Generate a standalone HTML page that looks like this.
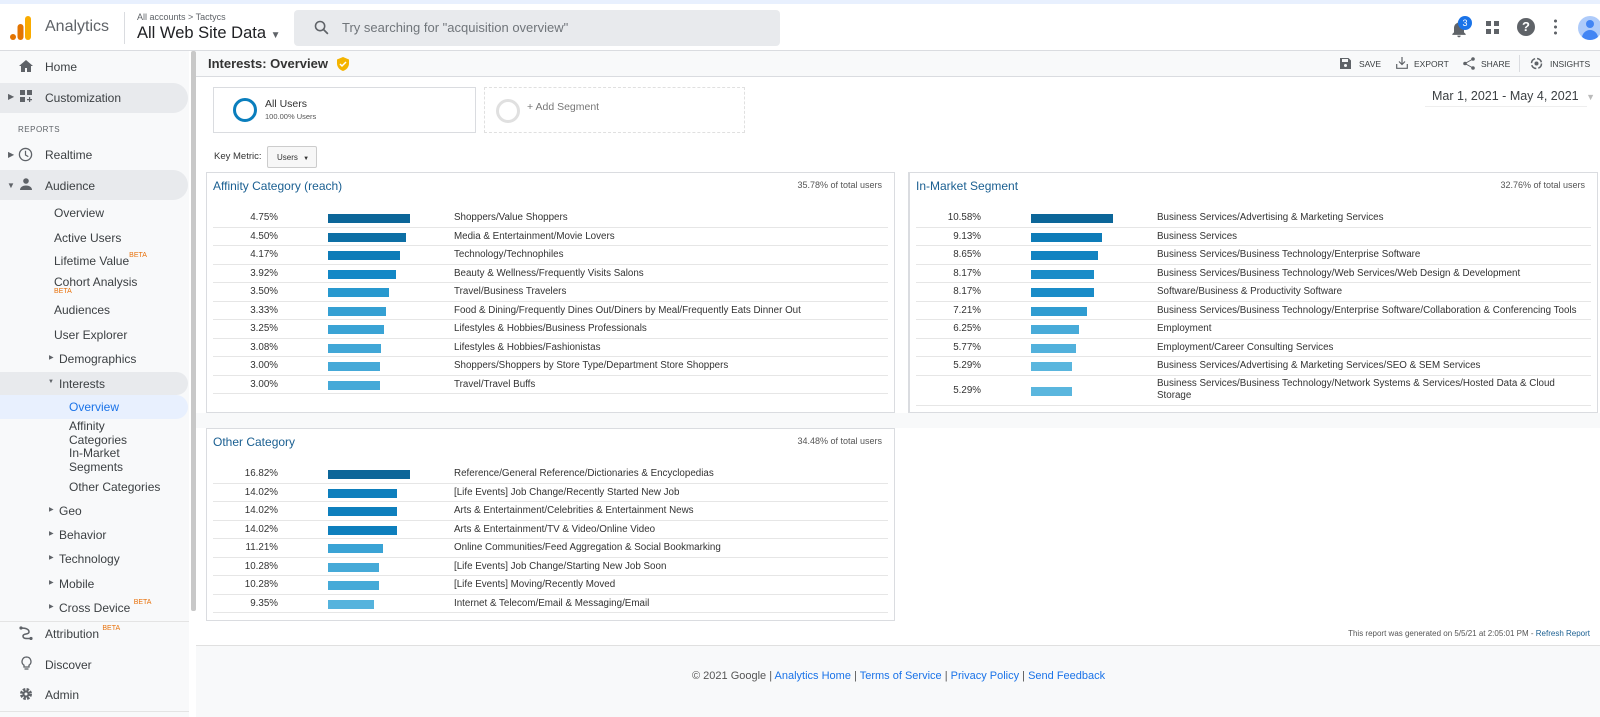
<!DOCTYPE html>
<html><head><meta charset="utf-8"><style>
*{box-sizing:border-box;margin:0;padding:0}
body{width:1600px;height:717px;overflow:hidden;font-family:"Liberation Sans",Arial,sans-serif;background:#fff;color:#333;position:relative}
.a{position:absolute;white-space:nowrap}
#top{position:absolute;left:0;top:0;width:1600px;height:4px;background:#e8f0fe}
#hdr{position:absolute;left:0;top:4px;width:1600px;height:47px;border-bottom:1px solid #dadce0;background:#fff}
#side{position:absolute;left:0;top:51px;width:189px;height:666px;background:#f8f9fa}
#sb{position:absolute;left:191px;top:51px;width:5px;height:560px;background:#c8c8c8;border-radius:2px}
.si{position:absolute;font-size:12px;color:#3c4043;white-space:nowrap}
.hl{position:absolute;left:0;width:188px;background:#e8eaed;border-radius:0 16px 16px 0}
.beta{font-size:7px;color:#e8710a;vertical-align:top;position:relative;top:-2px}
.tri{font-size:8px;color:#5f6368;position:absolute}
.panel{position:absolute;border:1px solid #dadce0;background:#fff}
.ptitle{position:absolute;left:6px;top:6px;font-size:12px;color:#1a5f91}
.ptot{position:absolute;right:12px;top:7px;font-size:9px;color:#555}
.rows{position:absolute;left:6px;right:6px;top:36px}
.r{position:relative;height:18.5px;border-bottom:1px solid #e6e6e6;font-size:9.8px;color:#333}
.r .p{position:absolute;right:calc(100% - 65px);top:3px}
.r .b{position:absolute;left:115px;top:5px;height:9px}
.r .l{position:absolute;left:241px;top:3px;white-space:nowrap}
</style></head><body>
<div id="top"></div>
<div id="hdr">
 <svg class="a" style="left:10px;top:12px" width="22" height="24" viewBox="0 0 22 24"><rect x="15" y="0" width="6" height="24" rx="3" fill="#f9ab00"/><rect x="7.5" y="8" width="6" height="16" rx="3" fill="#e37400"/><circle cx="3" cy="21" r="3" fill="#e37400"/></svg>
 <div class="a" style="left:45px;top:14px;font-size:16px;color:#5f6368">Analytics</div>
 <div class="a" style="left:124px;top:8px;width:1px;height:32px;background:#dadce0"></div>
 <div class="a" style="left:137px;top:8px;font-size:9px;color:#5f6368">All accounts &gt; Tactycs</div>
 <div class="a" style="left:137px;top:20px;font-size:16.5px;color:#202124">All Web Site Data <span style="font-size:10px;color:#5f6368">▼</span></div>
 <div class="a" style="left:294px;top:6px;width:486px;height:36px;background:#e8eaed;border-radius:4px"></div>
 <svg class="a" style="left:313px;top:15px" width="17" height="17" viewBox="0 0 24 24"><circle cx="10" cy="10" r="6.5" stroke="#5f6368" stroke-width="2.2" fill="none"/><path d="M15 15l6 6" stroke="#5f6368" stroke-width="2.4"/></svg>
 <div class="a" style="left:342px;top:16px;font-size:13px;color:#70757a">Try searching for "acquisition overview"</div>
 <svg class="a" style="left:1449px;top:15px" width="20" height="20" viewBox="0 0 24 24"><path d="M12 22a2 2 0 002-2h-4a2 2 0 002 2zm6-6V11c0-3-1.6-5.6-4.5-6.3V4a1.5 1.5 0 00-3 0v.7C7.6 5.4 6 8 6 11v5l-2 2v1h16v-1z" fill="#5f6368"/></svg>
 <div class="a" style="left:1458px;top:12px;width:14px;height:14px;border-radius:7px;background:#1a73e8;color:#fff;font-size:9px;text-align:center;line-height:14px">3</div>
 <svg class="a" style="left:1486px;top:17px" width="14" height="14" viewBox="0 0 14 14" fill="#5f6368"><rect x="0" y="0" width="5" height="5"/><rect x="8" y="0" width="5" height="5"/><rect x="0" y="8" width="5" height="5"/><rect x="8" y="8" width="5" height="5"/></svg>
 <div class="a" style="left:1517px;top:14px;width:18px;height:18px;border-radius:9px;background:#5f6368;color:#fff;font-size:13px;font-weight:bold;text-align:center;line-height:18px">?</div>
 <div class="a" style="left:1554px;top:14px;width:3px;height:18px;background:radial-gradient(circle,#5f6368 1.4px,transparent 1.6px) 0 0/3px 6px"></div>
 <div class="a" style="left:1578px;top:12px;width:24px;height:24px;border-radius:12px;background:#aecbfa;overflow:hidden"><div class="a" style="left:8px;top:4px;width:8px;height:8px;border-radius:4px;background:#4285f4"></div><div class="a" style="left:4px;top:14px;width:16px;height:12px;border-radius:8px 8px 0 0;background:#4285f4"></div></div>
</div>

<div id="side">
 <div class="hl" style="top:32px;height:30px"></div>
 <div class="hl" style="top:119px;height:30px"></div>
 <div class="hl" style="top:321px;height:23px"></div>
 <div class="hl" style="top:344px;height:24px;background:#e8f0fe"></div>
 <div class="a" style="left:0;top:570px;width:189px;height:1px;background:#e4e4e4"></div>
 <div class="a" style="left:0;top:660px;width:189px;height:1px;background:#e4e4e4"></div>
</div>
<div id="sb"></div>
<svg class="a" style="left:19px;top:60px" width="14" height="12" viewBox="0 0 14 12"><path d="M7 0L0 6h2v6h4V8h2v4h4V6h2z" fill="#5f6368"/></svg>
<div class="si" style="left:45px;top:60px">Home</div>
<div class="tri" style="left:8px;top:92px">▶</div>
<svg class="a" style="left:20px;top:90px" width="13" height="13" viewBox="0 0 13 13" fill="#5f6368"><rect x="0" y="0" width="5" height="5"/><rect x="7" y="0" width="5" height="5"/><rect x="0" y="7" width="5" height="5"/><path d="M9 7h1.2v2H12v1.2h-1.8V12H9v-1.8H7V9h2z"/></svg>
<div class="si" style="left:45px;top:91px">Customization</div>
<div class="si" style="left:18px;top:125px;font-size:8px;letter-spacing:.5px;color:#5f6368">REPORTS</div>
<div class="tri" style="left:8px;top:150px">▶</div>
<svg class="a" style="left:18px;top:147px" width="15" height="15" viewBox="0 0 16 16"><circle cx="8" cy="8" r="6.5" stroke="#5f6368" stroke-width="1.4" fill="none"/><path d="M8 4v4.5l3 1.8" stroke="#5f6368" stroke-width="1.3" fill="none"/></svg>
<div class="si" style="left:45px;top:148px">Realtime</div>
<div class="tri" style="left:7px;top:181px">▼</div>
<svg class="a" style="left:20px;top:178px" width="12" height="12" viewBox="0 0 12 12" fill="#5f6368"><circle cx="6" cy="3" r="2.8"/><path d="M0 12c0-3 3-4.5 6-4.5s6 1.5 6 4.5z"/></svg>
<div class="si" style="left:45px;top:179px">Audience</div>
<div class="si" style="left:54px;top:206px">Overview</div>
<div class="si" style="left:54px;top:231px">Active Users</div>
<div class="si" style="left:54px;top:254px">Lifetime Value<span class="beta">BETA</span></div>
<div class="si" style="left:54px;top:275px">Cohort Analysis</div>
<div class="a" style="left:54px;top:288px;font-size:7px;color:#e8710a">BETA</div>
<div class="si" style="left:54px;top:303px">Audiences</div>
<div class="si" style="left:54px;top:328px">User Explorer</div>
<div class="tri" style="left:49px;top:354px;font-size:6px">▶</div>
<div class="si" style="left:59px;top:352px">Demographics</div>
<div class="tri" style="left:48px;top:379px;font-size:6px">▼</div>
<div class="si" style="left:59px;top:377px">Interests</div>
<div class="si" style="left:69px;top:400px;color:#1a73e8">Overview</div>
<div class="si" style="left:69px;top:420px;line-height:13.5px">Affinity<br>Categories<br>In-Market<br>Segments</div>
<div class="si" style="left:69px;top:480px">Other Categories</div>
<div class="tri" style="left:49px;top:506px;font-size:6px">▶</div><div class="si" style="left:59px;top:504px">Geo</div>
<div class="tri" style="left:49px;top:530px;font-size:6px">▶</div><div class="si" style="left:59px;top:528px">Behavior</div>
<div class="tri" style="left:49px;top:554px;font-size:6px">▶</div><div class="si" style="left:59px;top:552px">Technology</div>
<div class="tri" style="left:49px;top:579px;font-size:6px">▶</div><div class="si" style="left:59px;top:577px">Mobile</div>
<div class="tri" style="left:49px;top:603px;font-size:6px">▶</div><div class="si" style="left:59px;top:601px">Cross Device <span class="beta">BETA</span></div>
<svg class="a" style="left:19px;top:626px" width="14" height="14" viewBox="0 0 14 14"><path d="M2 2c5 0 8 1 8 4s-6 1-6 4 3 2.5 8 2.5" stroke="#5f6368" stroke-width="1.5" fill="none"/><circle cx="2" cy="2" r="1.6" fill="#5f6368"/><circle cx="12" cy="12.5" r="1.6" fill="#5f6368"/></svg>
<div class="si" style="left:45px;top:627px">Attribution <span class="beta">BETA</span></div>
<svg class="a" style="left:21px;top:656px" width="11" height="15" viewBox="0 0 11 15"><path d="M5.5 1a4.5 4.5 0 00-2.5 8.2V11h5V9.2A4.5 4.5 0 005.5 1z" stroke="#5f6368" stroke-width="1.3" fill="none"/><path d="M3.5 13h4" stroke="#5f6368" stroke-width="1.3"/></svg>
<div class="si" style="left:45px;top:658px">Discover</div>
<svg class="a" style="left:19px;top:687px" width="14" height="14" viewBox="0 0 14 14"><circle cx="7" cy="7" r="4.5" fill="none" stroke="#5f6368" stroke-width="3" stroke-dasharray="2.4 1.2"/><circle cx="7" cy="7" r="3.5" fill="#5f6368"/><circle cx="7" cy="7" r="1.5" fill="#f8f9fa"/></svg>
<div class="si" style="left:45px;top:688px">Admin</div>

<!-- main -->
<div class="a" style="left:196px;top:51px;width:1404px;height:26px;background:#f8f9fa;border-bottom:1px solid #dadce0"></div>
<div class="a" style="left:208px;top:56px;font-size:13px;font-weight:bold;color:#333">Interests: Overview</div>
<svg class="a" style="left:337px;top:57px" width="12" height="14" viewBox="0 0 12 14"><path d="M6 0L0 2.5v4C0 10 2.7 13 6 14c3.3-1 6-4 6-7.5v-4z" fill="#f4b400"/><path d="M3 7l2 2 4-4" stroke="#fff" stroke-width="1.5" fill="none"/></svg>
<svg class="a" style="left:1340px;top:58px" width="11" height="11" viewBox="0 0 11 11"><path d="M0 0h8.5L11 2.5V11H0z" fill="#5f6368"/><rect x="2" y="1" width="6" height="3" fill="#f8f9fa"/><circle cx="5.5" cy="7.5" r="1.5" fill="#f8f9fa"/></svg>
<div class="a" style="left:1359px;top:59px;font-size:8.5px;color:#3c4043">SAVE</div>
<svg class="a" style="left:1396px;top:57px" width="12" height="12" viewBox="0 0 12 12"><path d="M6 0v7M3 4.5L6 7.5 9 4.5M.7 7v4.3h10.6V7" stroke="#5f6368" stroke-width="1.2" fill="none"/></svg>
<div class="a" style="left:1414px;top:59px;font-size:8.5px;color:#3c4043">EXPORT</div>
<svg class="a" style="left:1463px;top:57px" width="12" height="13" viewBox="0 0 12 13"><circle cx="10" cy="2" r="1.8" fill="#5f6368"/><circle cx="2" cy="6.5" r="1.8" fill="#5f6368"/><circle cx="10" cy="11" r="1.8" fill="#5f6368"/><path d="M10 2L2 6.5 10 11" stroke="#5f6368" fill="none"/></svg>
<div class="a" style="left:1481px;top:59px;font-size:8.5px;color:#3c4043">SHARE</div>
<div class="a" style="left:1519px;top:55px;width:1px;height:17px;background:#dadce0"></div>
<svg class="a" style="left:1530px;top:57px" width="13" height="13" viewBox="0 0 13 13"><circle cx="6.5" cy="6.5" r="5" stroke="#5f6368" stroke-width="1.5" fill="none" stroke-dasharray="6 2"/><circle cx="6.5" cy="6.5" r="2" fill="#5f6368"/></svg>
<div class="a" style="left:1550px;top:59px;font-size:8.5px;color:#3c4043">INSIGHTS</div>

<div class="a" style="left:213px;top:87px;width:263px;height:46px;border:1px solid #dadce0"></div>
<div class="a" style="left:233px;top:98px;width:24px;height:24px;border-radius:12px;border:3px solid #0a7ebd"></div>
<div class="a" style="left:265px;top:98px;font-size:10.5px;color:#333">All Users</div>
<div class="a" style="left:265px;top:112px;font-size:7.5px;color:#555">100.00% Users</div>
<div class="a" style="left:484px;top:87px;width:261px;height:46px;border:1px dashed #e0e0e0"></div>
<div class="a" style="left:496px;top:99px;width:24px;height:24px;border-radius:12px;border:3px solid #e0e0e0"></div>
<div class="a" style="left:527px;top:101px;font-size:10.5px;color:#777">+ Add Segment</div>
<div class="a" style="left:1432px;top:89px;font-size:12.5px;color:#3c4043">Mar 1, 2021 - May 4, 2021 <span style="color:#bbb;font-size:9px;margin-left:4px">▼</span></div>
<div class="a" style="left:1425px;top:106px;width:162px;height:1px;background:#eee"></div>
<div class="a" style="left:214px;top:151px;font-size:9.5px;color:#333">Key Metric:</div>
<div class="a" style="left:267px;top:146px;width:50px;height:22px;border:1px solid #ccc;border-radius:2px;background:#f7f7f7;font-size:8px;color:#333;padding:6px 0 0 9px">Users <span style="font-size:6px;margin-left:3px">▼</span></div>

<div class="panel" style="left:206px;top:172px;width:689px;height:241px">
 <div class="ptitle">Affinity Category (reach)</div><div class="ptot">35.78% of total users</div>
 <div class="rows">
  <div class="r"><span class="p">4.75%</span><span class="b" style="width:82px;background:#0c6699"></span><span class="l">Shoppers/Value Shoppers</span></div>
  <div class="r"><span class="p">4.50%</span><span class="b" style="width:78px;background:#0d6fa5"></span><span class="l">Media &amp; Entertainment/Movie Lovers</span></div>
  <div class="r"><span class="p">4.17%</span><span class="b" style="width:72px;background:#0e7cb8"></span><span class="l">Technology/Technophiles</span></div>
  <div class="r"><span class="p">3.92%</span><span class="b" style="width:68px;background:#1388c6"></span><span class="l">Beauty &amp; Wellness/Frequently Visits Salons</span></div>
  <div class="r"><span class="p">3.50%</span><span class="b" style="width:61px;background:#2899cf"></span><span class="l">Travel/Business Travelers</span></div>
  <div class="r"><span class="p">3.33%</span><span class="b" style="width:58px;background:#35a0d3"></span><span class="l">Food &amp; Dining/Frequently Dines Out/Diners by Meal/Frequently Eats Dinner Out</span></div>
  <div class="r"><span class="p">3.25%</span><span class="b" style="width:56px;background:#3aa3d5"></span><span class="l">Lifestyles &amp; Hobbies/Business Professionals</span></div>
  <div class="r"><span class="p">3.08%</span><span class="b" style="width:53px;background:#41a7d7"></span><span class="l">Lifestyles &amp; Hobbies/Fashionistas</span></div>
  <div class="r"><span class="p">3.00%</span><span class="b" style="width:52px;background:#45a9d8"></span><span class="l">Shoppers/Shoppers by Store Type/Department Store Shoppers</span></div>
  <div class="r"><span class="p">3.00%</span><span class="b" style="width:52px;background:#45a9d8"></span><span class="l">Travel/Travel Buffs</span></div>
 </div>
</div>
<div class="a" style="left:895px;top:172px;width:14px;height:241px;background:#fff;border-right:1px solid #dadce0"></div>
<div class="panel" style="left:909px;top:172px;width:689px;height:241px">
 <div class="ptitle">In-Market Segment</div><div class="ptot">32.76% of total users</div>
 <div class="rows">
  <div class="r"><span class="p">10.58%</span><span class="b" style="width:82px;background:#0c6699"></span><span class="l">Business Services/Advertising &amp; Marketing Services</span></div>
  <div class="r"><span class="p">9.13%</span><span class="b" style="width:71px;background:#0e7cb8"></span><span class="l">Business Services</span></div>
  <div class="r"><span class="p">8.65%</span><span class="b" style="width:67px;background:#1283c1"></span><span class="l">Business Services/Business Technology/Enterprise Software</span></div>
  <div class="r"><span class="p">8.17%</span><span class="b" style="width:63px;background:#1a8cc8"></span><span class="l">Business Services/Business Technology/Web Services/Web Design &amp; Development</span></div>
  <div class="r"><span class="p">8.17%</span><span class="b" style="width:63px;background:#1a8cc8"></span><span class="l">Software/Business &amp; Productivity Software</span></div>
  <div class="r"><span class="p">7.21%</span><span class="b" style="width:56px;background:#2f9cd1"></span><span class="l">Business Services/Business Technology/Enterprise Software/Collaboration &amp; Conferencing Tools</span></div>
  <div class="r"><span class="p">6.25%</span><span class="b" style="width:48px;background:#48abd9"></span><span class="l">Employment</span></div>
  <div class="r"><span class="p">5.77%</span><span class="b" style="width:45px;background:#52b1dc"></span><span class="l">Employment/Career Consulting Services</span></div>
  <div class="r"><span class="p">5.29%</span><span class="b" style="width:41px;background:#5ab6de"></span><span class="l">Business Services/Advertising &amp; Marketing Services/SEO &amp; SEM Services</span></div>
  <div class="r" style="height:30px"><span class="p" style="top:9px">5.29%</span><span class="b" style="width:41px;background:#5ab6de;top:11px"></span><span class="l" style="line-height:12px;top:2px">Business Services/Business Technology/Network Systems &amp; Services/Hosted Data &amp; Cloud<br>Storage</span></div>
 </div>
</div>
<div class="a" style="left:196px;top:413px;width:1404px;height:15px;background:#f8f9fa"></div>
<div class="panel" style="left:206px;top:428px;width:689px;height:193px">
 <div class="ptitle">Other Category</div><div class="ptot">34.48% of total users</div>
 <div class="rows">
  <div class="r"><span class="p">16.82%</span><span class="b" style="width:82px;background:#0c6699"></span><span class="l">Reference/General Reference/Dictionaries &amp; Encyclopedias</span></div>
  <div class="r"><span class="p">14.02%</span><span class="b" style="width:69px;background:#0e7fbd"></span><span class="l">[Life Events] Job Change/Recently Started New Job</span></div>
  <div class="r"><span class="p">14.02%</span><span class="b" style="width:69px;background:#0e7fbd"></span><span class="l">Arts &amp; Entertainment/Celebrities &amp; Entertainment News</span></div>
  <div class="r"><span class="p">14.02%</span><span class="b" style="width:69px;background:#0e7fbd"></span><span class="l">Arts &amp; Entertainment/TV &amp; Video/Online Video</span></div>
  <div class="r"><span class="p">11.21%</span><span class="b" style="width:55px;background:#3aa3d5"></span><span class="l">Online Communities/Feed Aggregation &amp; Social Bookmarking</span></div>
  <div class="r"><span class="p">10.28%</span><span class="b" style="width:51px;background:#46aad8"></span><span class="l">[Life Events] Job Change/Starting New Job Soon</span></div>
  <div class="r"><span class="p">10.28%</span><span class="b" style="width:51px;background:#46aad8"></span><span class="l">[Life Events] Moving/Recently Moved</span></div>
  <div class="r"><span class="p">9.35%</span><span class="b" style="width:46px;background:#55b3dd"></span><span class="l">Internet &amp; Telecom/Email &amp; Messaging/Email</span></div>
 </div>
</div>
<div class="a" style="right:10px;top:629px;font-size:8px;color:#555">This report was generated on 5/5/21 at 2:05:01 PM - <span style="color:#1a5f91">Refresh Report</span></div>
<div class="a" style="left:196px;top:645px;width:1404px;height:72px;background:#f8f9fa;border-top:1px solid #e0e0e0"></div>
<div class="a" style="left:692px;top:670px;font-size:11px;color:#555">© 2021 Google | <span style="color:#1a73e8">Analytics Home</span> | <span style="color:#1a73e8">Terms of Service</span> | <span style="color:#1a73e8">Privacy Policy</span> | <span style="color:#1a73e8">Send Feedback</span></div>
</body></html>
